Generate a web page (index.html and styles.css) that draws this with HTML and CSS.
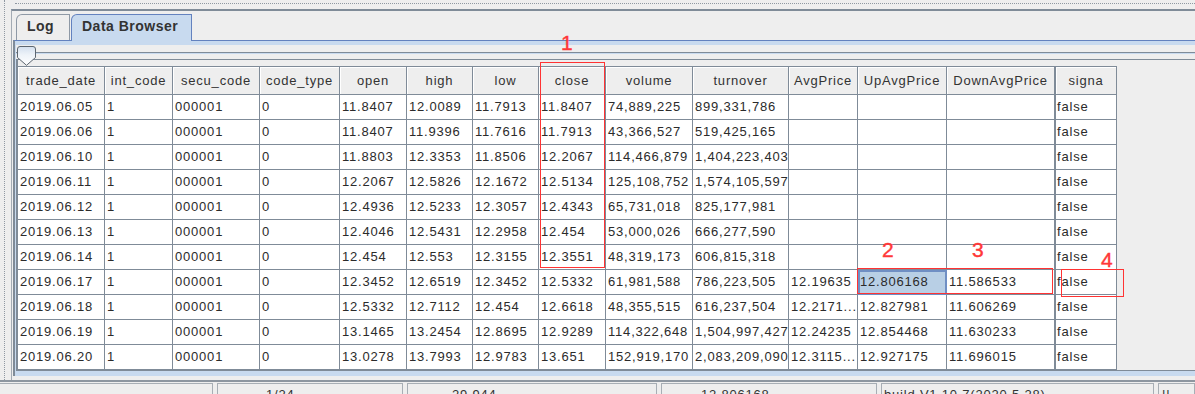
FILE: index.html
```html
<!DOCTYPE html>
<html lang="en">
<head>
    <meta charset="UTF-8">
    <meta name="viewport" content="width=device-width, initial-scale=1.0">
    <title>Data Browser</title>
    <link rel="stylesheet" href="styles.css">
</head>
<body>

<div class="screen">
    <div class="desk">
        <div class="dots"></div>
        <div class="pane">
            <div class="tabs">
                <div class="tab log">Log</div>
                <div class="tab on">Data Browser</div>
            </div>
            <div class="tab-body">
                <div class="tab-inner">
                    <div class="slider">
                        <div class="track"></div>
                        <svg class="thumb" width="19" height="20" viewBox="0 0 19 20">
                            <defs>
                                <linearGradient id="thumbFill" x1="0" y1="0" x2="0" y2="1">
                                    <stop offset="0" stop-color="#d3dfee"/>
                                    <stop offset="0.45" stop-color="#eef3f9"/>
                                    <stop offset="1" stop-color="#ffffff"/>
                                </linearGradient>
                            </defs>
                            <path d="M0.5 3 Q0.5 0.5 3 0.5 H16 Q18.5 0.5 18.5 3 V11.5 L9.5 19.3 L0.5 11.5 Z" fill="url(#thumbFill)" stroke="#5d6670"/>
                        </svg>
                    </div>
                    <div class="scroll">
                        <table class="grid">
                            <colgroup>
                                <col style="width:87px"><col style="width:68px"><col style="width:87px"><col style="width:80px">
                                <col style="width:67px"><col style="width:66px"><col style="width:66px"><col style="width:67px">
                                <col style="width:87px"><col style="width:96px"><col style="width:69px"><col style="width:89px">
                                <col style="width:108px"><col style="width:62px">
                            </colgroup>
                            <thead>
                                <tr>
                                    <th>trade_date</th><th>int_code</th><th>secu_code</th><th>code_type</th>
                                    <th>open</th><th>high</th><th>low</th><th>close</th>
                                    <th>volume</th><th>turnover</th><th>AvgPrice</th><th>UpAvgPrice</th>
                                    <th>DownAvgPrice</th><th class="sg">signa</th>
                                </tr>
                            </thead>
                            <tbody>
                                <tr><td>2019.06.05</td><td>1</td><td>000001</td><td>0</td><td>11.8407</td><td>12.0089</td><td>11.7913</td><td>11.8407</td><td>74,889,225</td><td>899,331,786</td><td></td><td></td><td></td><td class="sg">false</td></tr>
                                <tr><td>2019.06.06</td><td>1</td><td>000001</td><td>0</td><td>11.8407</td><td>11.9396</td><td>11.7616</td><td>11.7913</td><td>43,366,527</td><td>519,425,165</td><td></td><td></td><td></td><td class="sg">false</td></tr>
                                <tr><td>2019.06.10</td><td>1</td><td>000001</td><td>0</td><td>11.8803</td><td>12.3353</td><td>11.8506</td><td>12.2067</td><td>114,466,879</td><td>1,404,223,403</td><td></td><td></td><td></td><td class="sg">false</td></tr>
                                <tr><td>2019.06.11</td><td>1</td><td>000001</td><td>0</td><td>12.2067</td><td>12.5826</td><td>12.1672</td><td>12.5134</td><td>125,108,752</td><td>1,574,105,597</td><td></td><td></td><td></td><td class="sg">false</td></tr>
                                <tr><td>2019.06.12</td><td>1</td><td>000001</td><td>0</td><td>12.4936</td><td>12.5233</td><td>12.3057</td><td>12.4343</td><td>65,731,018</td><td>825,177,981</td><td></td><td></td><td></td><td class="sg">false</td></tr>
                                <tr><td>2019.06.13</td><td>1</td><td>000001</td><td>0</td><td>12.4046</td><td>12.5431</td><td>12.2958</td><td>12.454</td><td>53,000,026</td><td>666,277,590</td><td></td><td></td><td></td><td class="sg">false</td></tr>
                                <tr><td>2019.06.14</td><td>1</td><td>000001</td><td>0</td><td>12.454</td><td>12.553</td><td>12.3155</td><td>12.3551</td><td>48,319,173</td><td>606,815,318</td><td></td><td></td><td></td><td class="sg">false</td></tr>
                                <tr><td>2019.06.17</td><td>1</td><td>000001</td><td>0</td><td>12.3452</td><td>12.6519</td><td>12.3452</td><td>12.5332</td><td>61,981,588</td><td>786,223,505</td><td>12.19635</td><td class="sel">12.806168</td><td>11.586533</td><td class="sg">false</td></tr>
                                <tr><td>2019.06.18</td><td>1</td><td>000001</td><td>0</td><td>12.5332</td><td>12.7112</td><td>12.454</td><td>12.6618</td><td>48,355,515</td><td>616,237,504</td><td>12.2171...</td><td>12.827981</td><td>11.606269</td><td class="sg">false</td></tr>
                                <tr><td>2019.06.19</td><td>1</td><td>000001</td><td>0</td><td>13.1465</td><td>13.2454</td><td>12.8695</td><td>12.9289</td><td>114,322,648</td><td>1,504,997,427</td><td>12.24235</td><td>12.854468</td><td>11.630233</td><td class="sg">false</td></tr>
                                <tr><td>2019.06.20</td><td>1</td><td>000001</td><td>0</td><td>13.0278</td><td>13.7993</td><td>12.9783</td><td>13.651</td><td>152,919,170</td><td>2,083,209,090</td><td>12.3115...</td><td>12.927175</td><td>11.696015</td><td class="sg">false</td></tr>
                            </tbody>
                        </table>
                    </div>
                </div>
            </div>
        </div>
    </div>

    <div class="split"></div>

    <div class="status">
        <div class="cell c1"></div>
        <div class="cell c2">1/24</div>
        <div class="cell c3">29.944</div>
        <div class="cell c4">12.806168</div>
        <div class="cell c5">build V1.10.7(2020.5.28)</div>
        <div class="cell c6">||</div>
    </div>

    <!-- red review marks drawn on top of the screenshot -->
    <div class="mark box1"></div>
    <div class="mark box2"></div>
    <div class="mark box3"></div>
    <div class="num n1">1</div>
    <div class="num n2">2</div>
    <div class="num n3">3</div>
    <div class="num n4">4</div>
</div>

</body>
</html>
```

FILE: styles.css
```css
body {
    margin: 0;
    background-color: #eeeeee;
    font-family: "Liberation Sans", Arial, sans-serif;
    color: #333333;
    height: 394px;
    overflow: hidden;
}
.screen {
    position: relative;
    height: 394px;
}
.desk {
    margin-left: 4px;
    border-left: 1px dotted #8f98a2;
    padding: 3px 0 0 6px;
}
.dots {
    margin-left: 4px;
    border-top: 1px dotted #8f98a2;
}
.pane {
    margin-top: 5px;
    border-top: 2px solid #7f8b98;
    border-left: 1px solid #a3abb4;
    padding: 0 0 4px 1px;
}
.tabs {
    display: flex;
    align-items: flex-start;
    gap: 1px;
    height: 26px;
    padding: 3px 0 0 3px;
}
.tab {
    box-sizing: border-box;
    height: 26px;
    border: 1px solid #8e99a6;
    border-bottom: none;
    border-top-left-radius: 6px;
    background-color: #eeeeee;
    padding-left: 10px;
    font-size: 14px;
    font-weight: bold;
    letter-spacing: 0.5px;
    line-height: 22px;
    white-space: nowrap;
}
.tab.log {
    width: 54px;
}
.tab.on {
    width: 121px;
    height: 27px;
    margin-bottom: -1px;
    background-color: #c8daef;
    border-color: #6382bf;
    position: relative;
    z-index: 1;
}
.tab-body {
    border-top: 1px solid #6382bf;
    border-left: 2px solid #7f8b98;
}
.tab-inner {
    border-top: 4px solid #c8daef;
    border-left: 1px solid #c8daef;
    border-bottom: 5px solid #c8daef;
}
.slider {
    position: relative;
    height: 14px;
}
.track {
    position: relative;
    top: 7px;
    border-top: 1px solid #7f8b98;
    border-bottom: 1px solid #c8daef;
}
.thumb {
    position: absolute;
    left: 1px;
    top: 1px;
    z-index: 2;
}
.scroll {
    border-top: 1px solid #7f8b98;
    border-left: 2px solid #7f8b98;
    border-bottom: 1px solid #7f8b98;
    padding-top: 6px;
}
.grid {
    table-layout: fixed;
    width: 1099px;
    border-collapse: separate;
    border-spacing: 0;
    font-size: 13px;
    letter-spacing: 0.8px;
}
.grid th,
.grid td {
    padding: 0;
    border-right: 1px solid #7f8b98;
    border-bottom: 1px solid #7f8b98;
    white-space: nowrap;
    overflow: hidden;
}
.grid th {
    border-top: 1px solid #7f8b98;
    background-color: #eeeeee;
    box-shadow: inset 1px 1px 0 #ffffff;
    font-weight: normal;
    line-height: 27px;
    text-align: center;
}
.grid td {
    background-color: #ffffff;
    line-height: 24px;
    padding-left: 2px;
    color: #2b2b2b;
}
.grid .sg {
    border-left: 1px solid #7f8b98;
}
.grid td.sg {
    padding-left: 1px;
}
.grid td.sel {
    background-color: #b8cfe5;
    outline: 2px solid #6f8fc4;
    outline-offset: -2px;
}
.split {
    border-top: 2px solid #8d96a0;
}
.status {
    display: flex;
    gap: 4px;
    margin-top: 1px;
    font-size: 13px;
    letter-spacing: 0.8px;
}
.cell {
    box-sizing: border-box;
    height: 20px;
    border: 1px solid #a7aeb5;
    padding-top: 3px;
    line-height: 16px;
    white-space: nowrap;
    overflow: hidden;
}
.c1 { width: 214px; margin-left: -1px; }
.c2 { width: 186px; padding-left: 48px; }
.c3 { width: 250px; padding-left: 44px; }
.c4 { width: 216px; padding-left: 39px; }
.c5 { width: 273px; padding-left: 2px; }
.c6 { flex: 1; padding-left: 3px; }
.mark {
    position: absolute;
    border: 1px solid #ff3333;
}
.box1 { left: 540px; top: 62px; width: 63px; height: 204px; }
.box2 { left: 857px; top: 268px; width: 194px; height: 24px; }
.box3 { left: 1061px; top: 269px; width: 61px; height: 26px; }
.num {
    position: absolute;
    color: #ff3838;
    font-size: 21px;
    line-height: 21px;
    -webkit-text-stroke: 0.4px #ff3838;
}
.n1 { left: 561px; top: 32px; }
.n2 { left: 882px; top: 239px; }
.n3 { left: 972px; top: 239px; }
.n4 { left: 1101px; top: 249px; }
```
